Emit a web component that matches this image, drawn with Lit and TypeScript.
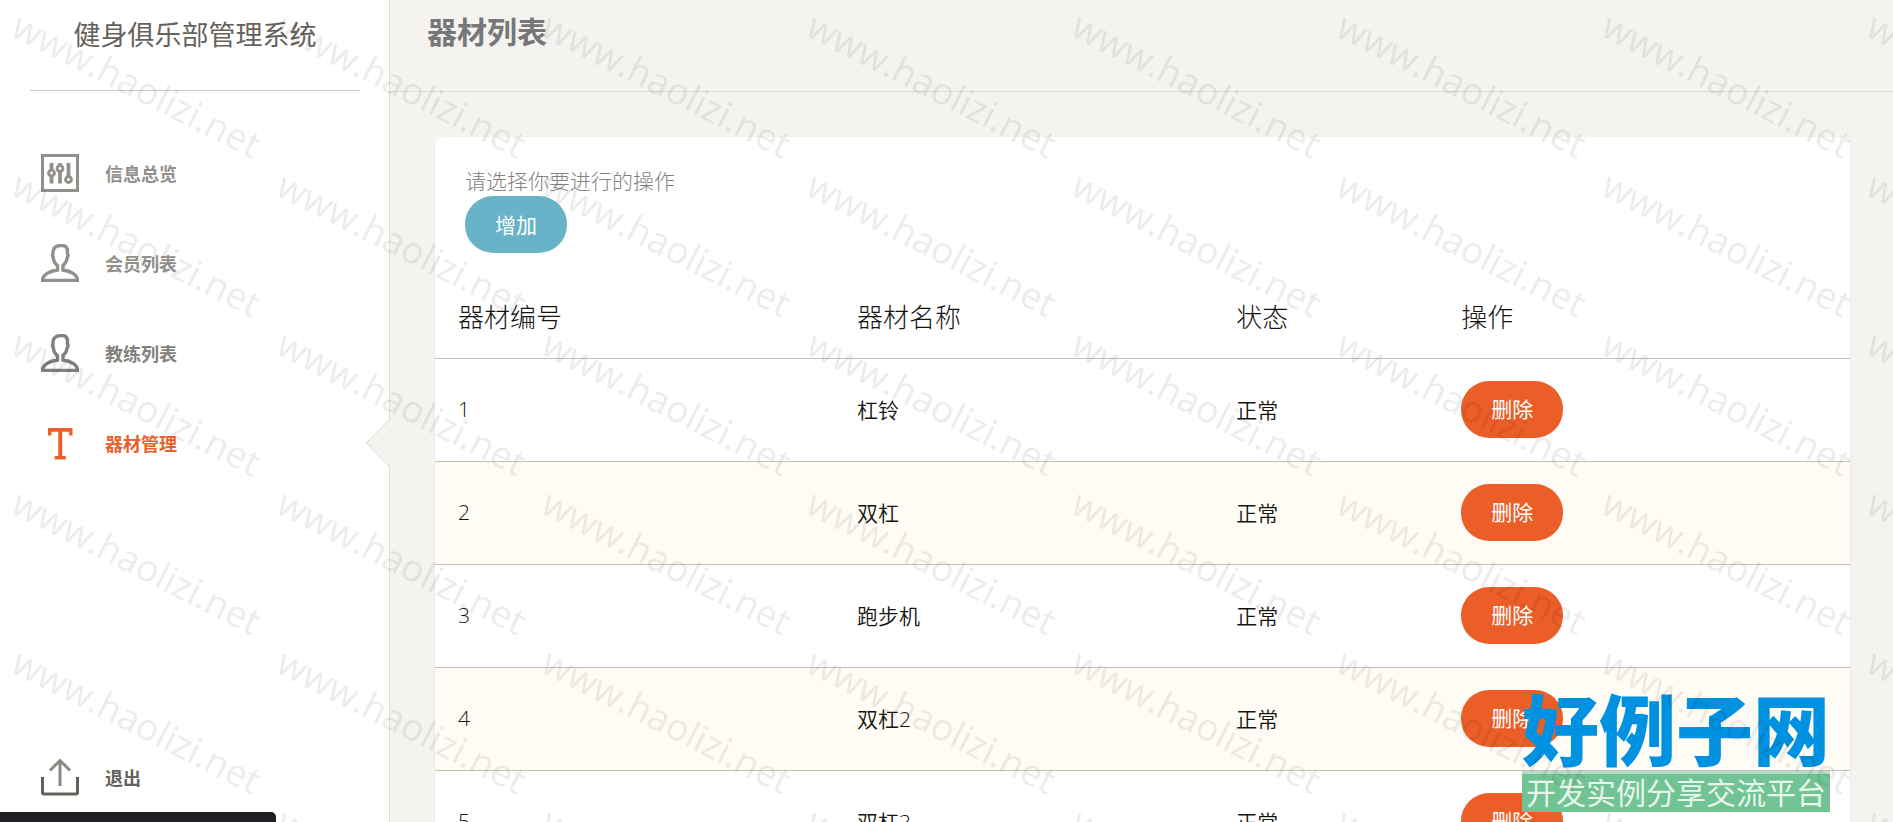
import { LitElement, html, css, svg } from "lit";
import { customElement, state } from "lit/decorators.js";
import { classMap } from "lit/directives/class-map.js";

const icons = {
  sliders: svg`<rect x="1.5" y="1.5" width="35" height="35" stroke-width="3"/>
    <path stroke-width="3.8" d="M10.500 9v7M10.500 22v7.500M19 9v2M19 17.500v12M27.500 9v14"/>
    <g stroke-width="3"><circle cx="10.500" cy="19" r="2.900"/><circle cx="19" cy="14.500" r="2.900"/><circle cx="27.500" cy="25.500" r="2.900"/></g>`,
  user: svg`<path stroke-width="3.4" d="M16.500 26v-4.500c-2.600-2-4.200-5-4.200-8.200-1-1-.9-2.700-.2-3.700-.6-4.800 2-7.600 6.900-8.100h3c3 .4 5 3 4.400 8 .8 1.200.8 2.800-.2 4-.2 3.200-1.800 6-4.200 8V26c7.500 1 14.500 4.500 14.500 10.500h-35C1.500 30.500 9 27 16.500 26z"/>`,
  text: svg`<path stroke="none" fill="currentColor" d="M7 4h24.500v7.500H28.200V7.800H21.200v24.200h3.600v3.500H13.700V32h3.600V7.800h-6.900v3.700H7z"/>`,
  export: svg`<path stroke-width="3" d="M1.500 19v15.500a1.500 1.500 0 0 0 1.500 1.500h32a1.500 1.500 0 0 0 1.500-1.500V19"/><path stroke-width="3" opacity=".75" d="M19 28V2M9 12.500l10-10 10 10"/>`,
};

type IconName = keyof typeof icons;

const icon = (name: IconName) =>
  html`<svg class="icon" viewBox="0 0 38 38" fill="none" stroke="currentColor" aria-hidden="true">${icons[name]}</svg>`;

interface Equipment {
  id: number;
  name: string;
  status: string;
}

@customElement("app-sidebar")
export class AppSidebar extends LitElement {
  static styles = css`
    :host {
      display: flex;
      flex-direction: column;
      box-sizing: border-box;
      flex: 0 0 390px;
      background: #fff;
      border-right: 1px solid #dddcd9;
      color: #66615b;
    }
    .brand {
      margin: 0 29px 0 30px;
      height: 91px;
      padding-top: 15px;
      box-sizing: border-box;
      border-bottom: 1px solid #ccc9c4;
      font-size: 27px;
      line-height: 40px;
      text-align: center;
      font-weight: 400;
      flex: none;
    }
    .nav {
      flex: 1;
      display: flex;
      flex-direction: column;
      padding: 37px 0 0;
    }
    .item {
      position: relative;
      display: flex;
      align-items: center;
      gap: 26px;
      height: 90px;
      padding-left: 41px;
      color: inherit;
      text-decoration: none;
      font-size: 18px;
      font-weight: 700;
    }
    .label {
      opacity: 0.7;
    }
    .icon {
      width: 38px;
      height: 38px;
      opacity: 0.7;
    }
    .strong .icon,
    .strong .label {
      opacity: 0.8;
    }
    .active {
      color: #eb5e28;
    }
    .active .icon,
    .active .label,
    .logout .icon,
    .logout .label {
      opacity: 1;
    }
    .notch {
      position: absolute;
      right: -1px;
      top: 21px;
      width: 24px;
      height: 48px;
    }
    .logout {
      flex: none;
    }
  `;

  @state() private items: { icon: IconName; label: string; active?: boolean; strong?: boolean }[] = [
    { icon: "sliders", label: "信息总览" },
    { icon: "user", label: "会员列表" },
    { icon: "user", label: "教练列表", strong: true },
    { icon: "text", label: "器材管理", active: true },
  ];

  render() {
    return html`
      <div class="brand">健身俱乐部管理系统</div>
      <nav class="nav">
        ${this.items.map(
          (i) => html`<a href="#" class=${classMap({ item: true, active: !!i.active, strong: !!i.strong })}>
            ${icon(i.icon)}<span class="label">${i.label}</span>
            ${i.active
              ? html`<svg class="notch" viewBox="0 0 24 48" aria-hidden="true">
                  <path d="M24 .5L.7 24 24 47.500z" fill="#f4f3ef" />
                  <path d="M23.500 .5L.7 24l22.800 23.500" fill="none" stroke="#d5d4d1" />
                </svg>`
              : ""}
          </a>`
        )}
      </nav>
      <a href="#" class="item logout">${icon("export")}<span class="label">退出</span></a>
    `;
  }
}

@customElement("equipment-table")
export class EquipmentTable extends LitElement {
  static styles = css`
    :host {
      display: block;
    }
    .table {
      width: 100%;
      border-collapse: separate;
      border-spacing: 0;
      table-layout: fixed;
      color: #151412;
    }
    .c-id {
      width: 28.2%;
    }
    .c-name {
      width: 26.8%;
    }
    .c-status {
      width: 15.9%;
    }
    .th {
      height: 84px;
      box-sizing: border-box;
      padding: 0 23px 2px;
      text-align: left;
      font-size: 26px;
      font-weight: 300;
      border-bottom: 1px solid #c8c1b5;
    }
    .td {
      height: 103px;
      box-sizing: border-box;
      padding: 0 23px 2px;
      font-size: 21px;
      font-weight: 350;
      border-bottom: 1px solid #c8c1b5;
    }
    .row:nth-child(even) {
      background: #fffcf5;
    }
    .remove {
      display: block;
      height: 57px;
      padding: 0 30px 2px;
      border: 0;
      border-radius: 28px;
      background: #eb5e28;
      color: #fff;
      font: inherit;
      font-weight: 400;
    }
  `;

  @state() private rows: Equipment[] = [
    { id: 1, name: "杠铃", status: "正常" },
    { id: 2, name: "双杠", status: "正常" },
    { id: 3, name: "跑步机", status: "正常" },
    { id: 4, name: "双杠2", status: "正常" },
    { id: 5, name: "双杠3", status: "正常" },
  ];

  render() {
    return html`<table class="table">
      <thead>
        <tr>
          <th class="th c-id">器材编号</th>
          <th class="th c-name">器材名称</th>
          <th class="th c-status">状态</th>
          <th class="th">操作</th>
        </tr>
      </thead>
      <tbody>
        ${this.rows.map(
          (r) => html`<tr class="row">
            <td class="td">${r.id}</td>
            <td class="td">${r.name}</td>
            <td class="td">${r.status}</td>
            <td class="td"><button class="remove">删除</button></td>
          </tr>`
        )}
      </tbody>
    </table>`;
  }
}

@customElement("app-root")
export class AppRoot extends LitElement {
  static styles = css`
    :host {
      position: relative;
      display: flex;
      height: 100vh;
      overflow: hidden;
      background: #f4f3ef;
      font-family: "Open Sans", "Noto Sans CJK SC", sans-serif;
    }
    .main {
      flex: 1;
      min-width: 0;
      overflow: hidden;
    }
    .header {
      height: 92px;
      box-sizing: border-box;
      padding: 10px 37px 0;
      border-bottom: 1px solid #dddcd9;
    }
    .title {
      margin: 0;
      font-size: 30px;
      line-height: 44px;
      font-weight: 700;
      color: #777;
    }
    .card {
      margin: 45px 43px 45px 45px;
      background: #fff;
      border-radius: 8px;
      box-shadow: 0 2px 2px rgba(204, 197, 185, 0.5);
    }
    .tools {
      padding: 30px 30px 22px;
    }
    .hint {
      margin: 0;
      font-size: 21px;
      line-height: 29px;
      font-weight: 300;
      color: #85827d;
    }
    .add {
      display: block;
      height: 57px;
      padding: 0 30px 2px;
      border: 0;
      border-radius: 28px;
      background: #68b3c8;
      color: #fff;
      font: inherit;
      font-size: 21px;
    }
    .status {
      position: absolute;
      left: 0;
      bottom: 0;
      width: 276px;
      height: 10px;
      border-top-right-radius: 5px;
      background: #202124;
    }
    .logo {
      position: absolute;
      right: 63px;
      bottom: 10px;
      text-align: center;
    }
    .logo-name {
      font-size: 77px;
      line-height: 80px;
      font-weight: 900;
      color: #0091e0;
    }
    .logo-tag {
      border-top: 3px solid #b4dfc6;
      background: #71c393;
      color: #e6f6ec;
      font-size: 30px;
      line-height: 38px;
      padding: 0 4px;
    }
    .watermark {
      position: absolute;
      inset: 0;
      width: 100%;
      height: 100%;
      pointer-events: none;
    }
    .mark {
      font-size: 37px;
      fill: #000;
      fill-opacity: 0.075;
    }
  `;

  render() {
    return html`
      <app-sidebar></app-sidebar>
      <main class="main">
        <header class="header"><h1 class="title">器材列表</h1></header>
        <section class="card">
          <div class="tools">
            <p class="hint">请选择你要进行的操作</p>
            <button class="add">增加</button>
          </div>
          <equipment-table></equipment-table>
        </section>
      </main>
      <div class="status"></div>
      <div class="logo">
        <div class="logo-name">好例子网</div>
        <div class="logo-tag">开发实例分享交流平台</div>
      </div>
      <svg class="watermark" aria-hidden="true">
        <defs>
          <pattern id="tile" width="265" height="159" patternUnits="userSpaceOnUse">
            <text class="mark" transform="translate(9 35) rotate(27)">www.haolizi.net</text>
          </pattern>
        </defs>
        <rect width="100%" height="100%" fill="url(#tile)" />
      </svg>
    `;
  }
}
